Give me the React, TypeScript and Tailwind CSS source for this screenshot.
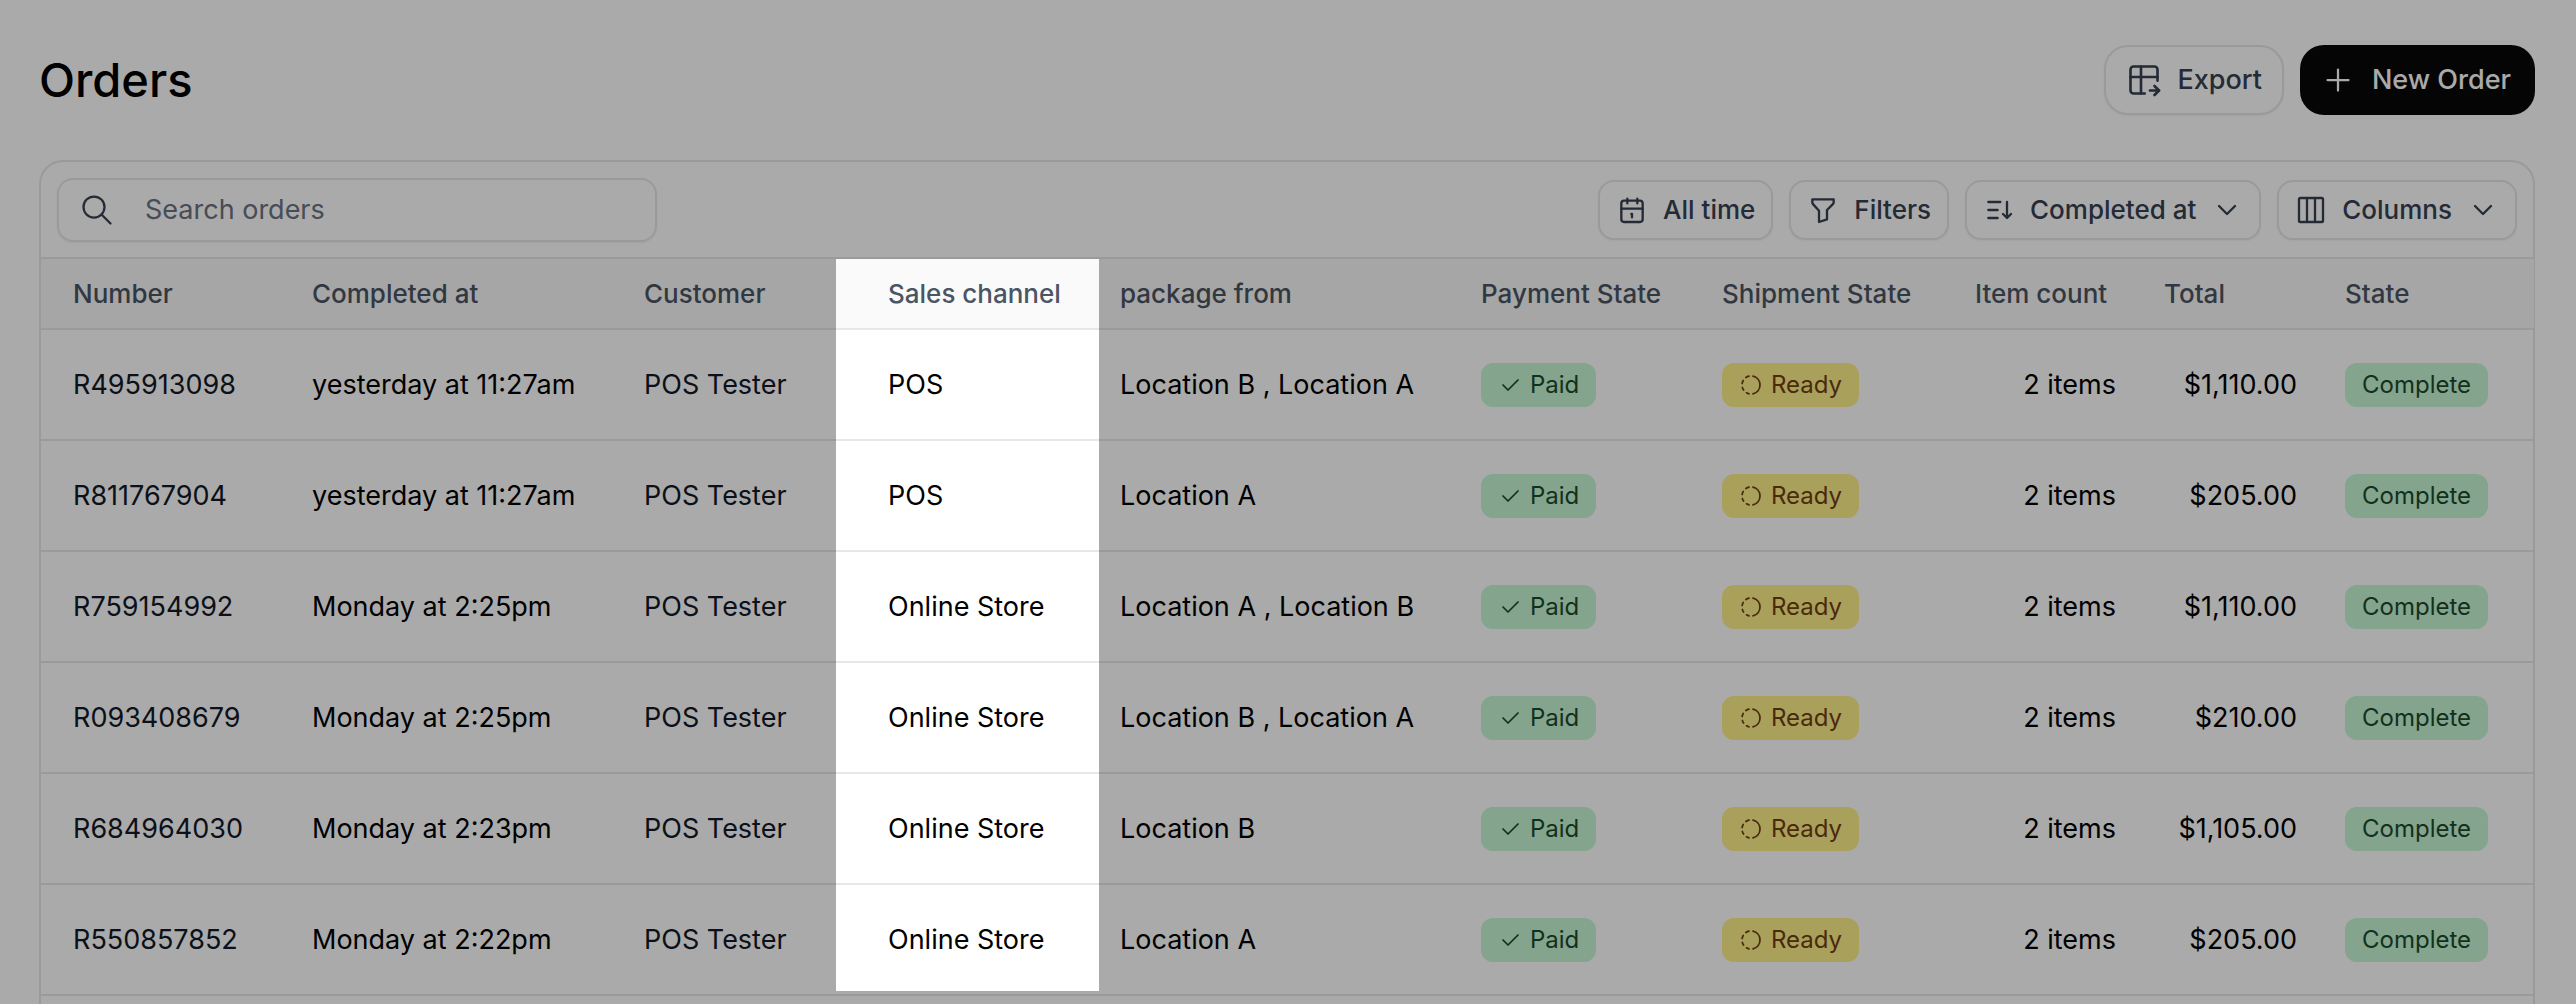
import { useId } from "react";
import type { ReactNode } from "react";
import {
  TbCheck,
  TbChevronDown,
  TbColumns3,
  TbFilter,
  TbPlus,
  TbProgress,
  TbSearch,
  TbTableExport,
} from "react-icons/tb";

type Order = {
  number: string;
  completedAt: string;
  channel: string;
  from: string;
  total: string;
};

const orders: Order[] = [
  { number: "R495913098", completedAt: "yesterday at 11:27am", channel: "POS", from: "Location B , Location A", total: "$1,110.00" },
  { number: "R811767904", completedAt: "yesterday at 11:27am", channel: "POS", from: "Location A", total: "$205.00" },
  { number: "R759154992", completedAt: "Monday at 2:25pm", channel: "Online Store", from: "Location A , Location B", total: "$1,110.00" },
  { number: "R093408679", completedAt: "Monday at 2:25pm", channel: "Online Store", from: "Location B , Location A", total: "$210.00" },
  { number: "R684964030", completedAt: "Monday at 2:23pm", channel: "Online Store", from: "Location B", total: "$1,105.00" },
  { number: "R550857852", completedAt: "Monday at 2:22pm", channel: "Online Store", from: "Location A", total: "$205.00" },
];

const columns = [
  { label: "Number", width: "w-[239px]" },
  { label: "Completed at", width: "w-[332px]" },
  { label: "Customer", width: "w-[244px]" },
  { label: "Sales channel", width: "w-[232px]" },
  { label: "package from", width: "w-[361px]" },
  { label: "Payment State", width: "w-[241px]" },
  { label: "Shipment State", width: "w-[253px]" },
  { label: "Item count", width: "w-[189px]" },
  { label: "Total", width: "w-[181px]" },
  { label: "State", width: "w-[221px]" },
];

function CalendarIcon() {
  return (
    <svg className="size-8" viewBox="0 0 24 24" fill="none" stroke="currentColor" strokeWidth="1.75" strokeLinecap="round" strokeLinejoin="round" aria-hidden="true">
      <path d="M4 7a2 2 0 0 1 2 -2h12a2 2 0 0 1 2 2v12a2 2 0 0 1 -2 2h-12a2 2 0 0 1 -2 -2z" />
      <path d="M16 3.500v3.500M8.500 3.500v3.500M4 11h16M11.500 15h.5v2.500" />
    </svg>
  );
}

function SortIcon() {
  return (
    <svg className="size-8" viewBox="0 0 24 24" fill="none" stroke="currentColor" strokeWidth="1.75" strokeLinecap="round" strokeLinejoin="round" aria-hidden="true">
      <path d="M4 6h9M4 12h7M4 18h7M15 15l3 3l3 -3M18 6v12" />
    </svg>
  );
}

function ToolButton({ icon, children, menu }: { icon: ReactNode; children: ReactNode; menu?: boolean }) {
  return (
    <button type="button" className="flex h-15 items-center gap-[15px] rounded-2xl border-2 border-gray-200 bg-white px-4 text-[26px] leading-9 font-medium text-[#374151] shadow-xs">
      {icon}
      {children}
      {menu && <TbChevronDown className="size-8" strokeWidth={1.75} />}
    </button>
  );
}

function Badge({ tone, icon, children }: { tone: "green" | "yellow"; icon?: ReactNode; children: ReactNode }) {
  const color = tone === "green" ? "bg-[#c6f6d5] text-[#1c4a2b]" : "bg-[#fef08a] text-[#713f12]";
  return (
    <span className={"inline-flex h-11 items-center gap-2 rounded-xl px-[17px] align-middle text-[24px] leading-8 " + color}>
      {icon}
      {children}
    </span>
  );
}

export default function App() {
  const searchId = useId();
  return (
    <main className="relative flex min-h-screen flex-col overflow-hidden bg-white pr-[41px] pl-[39px] font-['Inter',sans-serif]">
      <header className="flex h-40 items-center justify-between">
        <h1 className="text-[47px] leading-14 font-medium text-black">Orders</h1>
        <div className="flex items-center gap-4">
          <button type="button" className="flex h-[70px] items-center gap-4 rounded-3xl border-2 border-gray-200 bg-white px-5 text-[27px] leading-9 font-medium text-[#374151] shadow-xs">
            <TbTableExport className="size-9" strokeWidth={1.75} />
            Export
          </button>
          <button type="button" className="flex h-[70px] items-center gap-4 rounded-3xl bg-[#080808] pr-6 pl-5 text-[27px] leading-9 font-medium text-white">
            <TbPlus className="size-9" strokeWidth={1.5} />
            New Order
          </button>
        </div>
      </header>

      <section aria-label="Orders list" className="flex-1 rounded-t-3xl border-2 border-b-0 border-gray-200">
        <div className="flex items-center justify-between border-b-2 border-gray-200 px-4 pt-4 pb-[15px]">
          <label htmlFor={searchId} className="flex h-16 w-[600px] items-center gap-[30px] rounded-2xl border-2 border-gray-200 px-5 text-[#374151] shadow-xs">
            <TbSearch className="size-9" strokeWidth={1.5} />
            <input id={searchId} type="search" aria-label="Search orders" placeholder="Search orders" className="min-w-0 flex-1 bg-transparent text-[27px] leading-9 outline-none placeholder:text-[#6b7280]" />
          </label>
          <div className="flex items-center gap-4">
            <ToolButton icon={<CalendarIcon />}>All time</ToolButton>
            <ToolButton icon={<TbFilter className="size-8" strokeWidth={1.75} />}>Filters</ToolButton>
            <ToolButton icon={<SortIcon />} menu>Completed at</ToolButton>
            <ToolButton icon={<TbColumns3 className="size-8" strokeWidth={1.75} />} menu>Columns</ToolButton>
          </div>
        </div>

        <table className="w-full table-fixed text-left whitespace-nowrap">
          <thead>
            <tr className="h-[70px] border-b-2 border-gray-200 bg-[#fafafa] text-[26px] leading-9 text-[#4b5563]">
              {columns.map((column) => (
                <th key={column.label} scope="col" className={"relative py-0 pr-4 pl-8 font-medium " + column.width}>
                  {column.label}
                  {column.label === "Sales channel" && (
                    <span aria-hidden="true" className="pointer-events-none absolute top-0 -right-[11px] -left-5 z-10 h-[732px] shadow-[0_0_0_9999px_rgba(0,0,0,0.333)]" />
                  )}
                </th>
              ))}
            </tr>
          </thead>
          <tbody>
            {orders.map((order) => (
              <tr key={order.number} className="h-[111px] border-b-2 border-gray-200 text-[27px] leading-9 text-black *:py-0 *:pr-4 *:pl-8">
                <td className="text-[#111827]">{order.number}</td>
                <td>{order.completedAt}</td>
                <td className="text-[#111827]">POS Tester</td>
                <td>{order.channel}</td>
                <td>{order.from}</td>
                <td><Badge tone="green" icon={<TbCheck className="size-6" strokeWidth={1.75} />}>Paid</Badge></td>
                <td><Badge tone="yellow" icon={<TbProgress className="size-6" strokeWidth={1.75} />}>Ready</Badge></td>
                <td className="text-right">2 items</td>
                <td className="text-right">{order.total}</td>
                <td><Badge tone="green">Complete</Badge></td>
              </tr>
            ))}
          </tbody>
        </table>
      </section>
    </main>
  );
}
